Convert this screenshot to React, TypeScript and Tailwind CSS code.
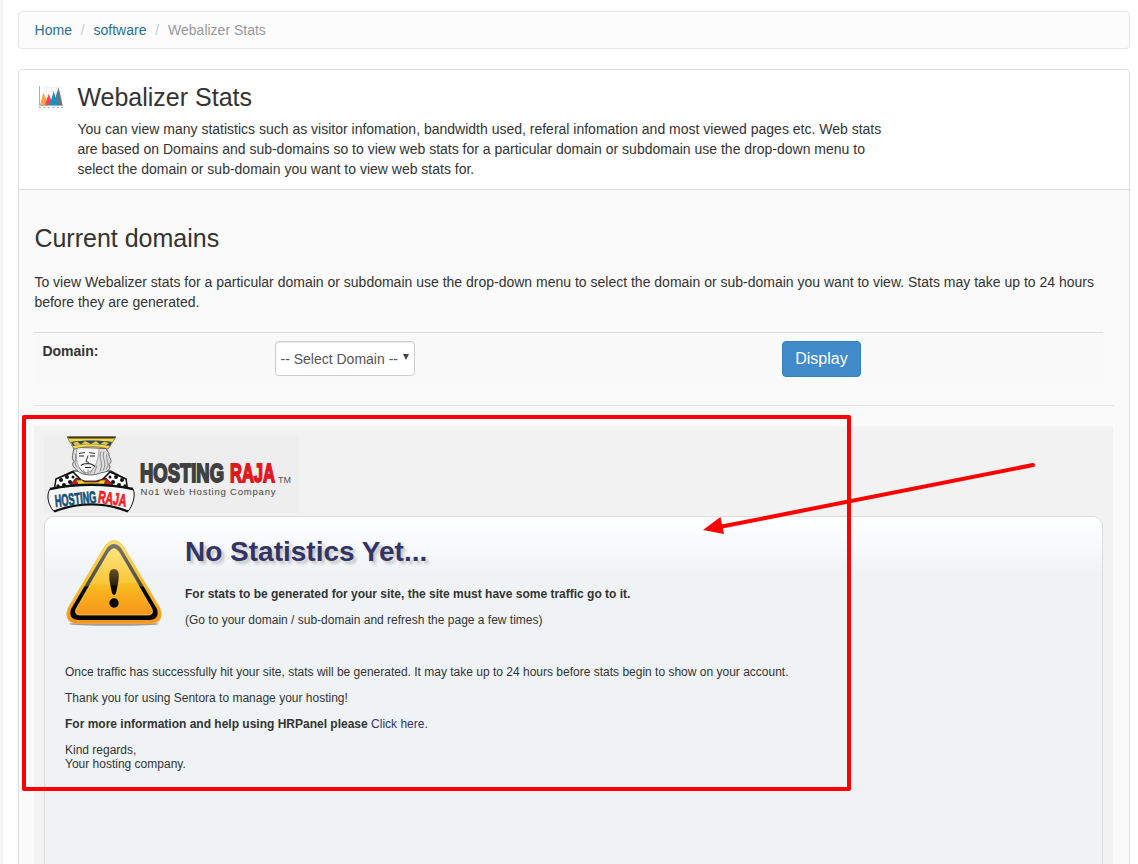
const ChartIcon = () => (
  <svg className="block h-6 w-6" viewBox="0 0 24 24">
    <path d="M3 1.500H23M3 5.500H23M3 9.500H23M3 13.500H23M7.500 0V19M12.500 0V19M17.500 0V19M22.500 0V19" stroke="#f3f3f3" strokeWidth="1" />
    <path d="M1 19.500C2 15 3.500 10 4.500 6.500 6 10 8 15 9 19.500Z" fill="#ffa23f" />
    <path d="M6 19.500C7 15 8.500 11 9.700 8 11 11 13 15 13.500 19.500Z" fill="#f44554" />
    <path d="M14 19.500C15.500 13 18 7 19.500 1.500 21 7 22.500 13 23.500 19.500Z" fill="#587b93" />
    <path d="M10.500 19.500C11.500 15 13.500 10 14.800 5 16 10 17.500 15 18 19.500Z" fill="#069bc6" />
    <path d="M.5 0V19.5H24" fill="none" stroke="#a5b1b7" strokeWidth="1" />
    <path d="M0 21.500H24" stroke="#a5b1b7" strokeWidth="1.2" strokeDasharray="2 2.4" />
  </svg>
);

const BrandLogo = () => (
  <svg className="block h-[78px] w-[257px]" viewBox="0 0 257 78">
    <path d="M2 1H257V78H2Z" fill="#eeeeee" />
    {/* shoulders */}
    <path d="M31 36 14 44 15 52 9 55 12 60H86L89 55 83 51 84 44 69 36Z" fill="#fff" stroke="#111" strokeWidth="1.2" />
    <path d="M14 44 31 37 38 44 28 51 12 57ZM84 44 68 37 61 44 70 51 86 57Z" fill="#fff" stroke="#111" strokeWidth="1.5" />
    <g fill="#111">
      <circle cx="19" cy="45" r="2" /><circle cx="25" cy="42" r="2" /><circle cx="31" cy="42" r="1.500" />
      <circle cx="28" cy="47" r="2" /><circle cx="22" cy="50" r="2" /><circle cx="16" cy="51" r="1.700" />
      <circle cx="80" cy="45" r="2" /><circle cx="74" cy="42" r="2" /><circle cx="68" cy="42" r="1.500" />
      <circle cx="71" cy="47" r="2" /><circle cx="77" cy="50" r="2" /><circle cx="83" cy="51" r="1.700" />
    </g>
    {/* collar */}
    <path d="M25 54 34 43 43 46H54L64 43 75 54Z" fill="#d51a22" stroke="#111" strokeWidth=".8" />
    <path d="M34 45H40L42 47H56L59 45H64L62 49 67 53H57L55 50H43L41 53H30L36 49Z" fill="#ffd333" stroke="#422e13" strokeWidth=".7" />
    {/* head and beard */}
    <g transform="translate(-3 .5)">
      <path d="M35 12C34 19 32 22 35 26 31 30 37 33 38 35 44 41 56 40 63 37 68 37 73 33 70 29 75 25 69 22 70 18L67 13Z" fill="#dedede" stroke="#444" strokeWidth=".8" />
      <path d="M38 12C36 25 39 33 45 37 52 38 59 32 60 13Z" fill="#f8f8f8" stroke="#777" strokeWidth=".6" />
      <path d="M40 18 46 17M50 17 56 18M49 20 47 26 50 27" fill="none" stroke="#333" strokeWidth="1" />
      <path d="M40 20.500H45M51 20.500H56M42 30C45 27 47 29 49 28 52 28 54 29 56 31M46 32H52" fill="none" stroke="#222" strokeWidth="1.100" />
      <path d="M40 32 45 38M44 34 47 39M49 34V39M54 33 51 38M58 30 55 38M62 16C59 23 65 26 61 36M65 16C62 23 69 27 64 35M68 18C66 24 72 28 67 34M36 18C38 23 34 27 38 32" fill="none" stroke="#666" strokeWidth=".7" />
    </g>
    {/* crown */}
    <path d="M25 2H74L66 14C56 11 43 11 32 14Z" fill="#f7d548" stroke="#554817" strokeWidth=".6" />
    <path d="M25 1.500H74L72 3.500H27Z" fill="#3b3419" />
    <path d="M29 7C40 5 59 5 70 7L68 11C57 8.500 42 8.500 31 11Z" fill="#27496b" />
    <path d="M31 8 35 6.500 39 9.500 43 6 49 9 54 6 58 9.500 62 6.500 67 8 64 10C55 8.500 43 8.500 33 10.500Z" fill="#e7c34a" />
    {/* ribbon */}
    <path d="M8 54C35 48.500 64 48.500 91 54 94 60 91 70 86 76.500 63 67 36 67 12 76.500 6 70 4 60 8 54Z" fill="#f8f8f8" stroke="#111" strokeWidth="1" />
    <path d="M8 54C35 48.500 64 48.500 91 54M12 76.500C36 67 63 67 86 76.500" fill="none" stroke="#111" strokeWidth="2.400" />
    <g fontFamily="Liberation Sans, Arial, sans-serif" fontWeight="700" fontSize="17" strokeWidth=".8">
      <text x="13.500" y="72" fill="#155078" stroke="#155078" textLength="41.500" lengthAdjust="spacingAndGlyphs" transform="rotate(-6 13.500 72)">HOSTING</text>
      <text x="55.500" y="67.500" fill="#f5211f" stroke="#f5211f" textLength="28.500" lengthAdjust="spacingAndGlyphs" transform="rotate(8 55.500 67.500)">RAJA</text>
    </g>
    <g fontFamily="Liberation Sans, Arial, sans-serif" fontWeight="700" fontSize="25.500" strokeWidth="1.800">
      <text x="98" y="47" fill="#3f403f" stroke="#3f403f" textLength="84" lengthAdjust="spacingAndGlyphs">HOSTING</text>
      <text x="188" y="47" fill="#e01621" stroke="#e01621" textLength="45" lengthAdjust="spacingAndGlyphs">RAJA</text>
    </g>
    <g fontFamily="Liberation Sans, Arial, sans-serif" fill="#555">
      <text x="236" y="47.500" fontSize="9" textLength="13" lengthAdjust="spacingAndGlyphs">TM</text>
      <text x="98.500" y="60" fontSize="9.500" fill="#444" textLength="135">No1 Web Hosting Company</text>
    </g>
  </svg>
);

const WarningIcon = () => (
  <svg className="block h-[90px] w-[100px]" viewBox="0 0 100 90">
    <defs>
      <linearGradient id="gold" x2="0" y2="1">
        <stop stopColor="#ffe06b" />
        <stop offset=".5" stopColor="#f9c120" />
        <stop offset="1" stopColor="#f7941d" />
      </linearGradient>
      <linearGradient id="rim" x2="0" y2="1">
        <stop stopColor="#77766c" />
        <stop offset=".55" stopColor="#4b473c" />
        <stop offset=".57" stopColor="#050505" />
        <stop offset="1" stopColor="#050505" />
      </linearGradient>
      <linearGradient id="mark" x2="0" y2="1">
        <stop stopColor="#655226" />
        <stop offset=".6" stopColor="#2c210e" />
        <stop offset=".65" stopColor="#050505" />
      </linearGradient>
    </defs>
    <ellipse cx="50" cy="84" rx="45" ry="1.800" fill="#766c65" opacity=".65" />
    <path d="M41 6Q50-5 59 6L96 68Q101 82 88 83.500H12Q-1 82 4 68Z" fill="url(#gold)" stroke="#f6b13f" strokeWidth=".6" />
    <path d="M43 8Q50 0 57 8L93 69Q96 79 86 80H14Q4 79 7 69Z" fill="url(#rim)" />
    <path d="M45 12Q50 5 55 12L88 69Q90 75 84 75H16Q10 75 12 69Z" fill="url(#gold)" stroke="#ffda62" strokeWidth=".7" />
    <path d="M45 12Q50 5 55 12L75 43Q60 43 47 44 36 45 25 44Z" fill="#fff" opacity=".12" />
    <path d="M50 29C57 29 55 40 52 53Q50 57 48 53C45 40 43 29 50 29Z" fill="url(#mark)" />
    <circle cx="50" cy="63" r="4.700" fill="#050505" />
  </svg>
);

const Breadcrumb = () => (
  <nav className="flex h-[38px] items-center rounded-[4px] border border-[#e7e7e7] bg-[#fcfcfc] px-[15.6px]">
    <a href="#" className="text-[#2a6f94]">Home</a>
    <span className="w-[21.6px] text-center text-[#ccc]">/</span>
    <a href="#" className="text-[#2a6f94]">software</a>
    <span className="w-[21.6px] text-center text-[#ccc]">/</span>
    <span className="text-[#999]">Webalizer Stats</span>
  </nav>
);

const StatsNotice = () => (
  <div className="mr-4 ml-[15px] h-[480px] bg-[#f2f2f2] px-2.5 pt-[9px]">
    <div className="-ml-0.5">
      <BrandLogo />
    </div>
    <div className="mt-[3px] h-[400px] rounded-t-[10px] border border-[#dcdcdc] bg-[#eff3f6] bg-[linear-gradient(#ffffff,#eff3f6)] bg-[length:100%_60px] bg-no-repeat px-5 pt-[22px] text-xs leading-[14px]">
      <div className="flex h-[126px]">
        <div className="-ml-0.5 pt-px pl-px">
          <WarningIcon />
        </div>
        <div className="ml-[21px]">
          <h1 className="mb-[22px] text-[28px] leading-[26px] font-bold text-[#333366] [text-shadow:3px_3px_3px_#c4c4c4]">
            No Statistics Yet...
          </h1>
          <p className="mb-3 font-bold">For stats to be generated for your site, the site must have some traffic go to it.</p>
          <p>(Go to your domain / sub-domain and refresh the page a few times)</p>
        </div>
      </div>
      <p className="mb-3">
        Once traffic has successfully hit your site, stats will be generated. It may take up to 24 hours before stats begin to show on your account.
      </p>
      <p className="mb-3">Thank you for using Sentora to manage your hosting!</p>
      <p className="mb-3">
        <b>For more information and help using HRPanel please</b> <a href="#" className="text-[#333366]">Click here.</a>
      </p>
      <p>
        Kind regards,
        <br />
        Your hosting company.
      </p>
    </div>
  </div>
);

const Annotation = () => (
  <>
    <div className="pointer-events-none absolute top-[415px] left-[19px] h-[376px] w-[829px] rounded-[2px] border-4 border-[#ff0000]" />
    <svg className="pointer-events-none absolute top-[455px] left-[697px] h-[90px] w-[340px]" viewBox="0 0 340 90">
      <path d="M333 10 22 71.500" stroke="#f00" strokeWidth="4" strokeLinecap="round" />
      <path d="M3 75 20.500 62 24 79Z" fill="#f00" />
    </svg>
  </>
);

const App = () => (
  <div className="relative h-[864px] w-[1138px] overflow-hidden border-l-[3px] border-[#f5f5f5] bg-white font-['Liberation_Sans',Arial,sans-serif] text-sm leading-5 text-[#333]">
    <main className="ml-[15px] w-[1112px] pt-[11px]">
      <Breadcrumb />
      <section className="mt-5 h-[850px] rounded-[4px] border border-[#ddd] bg-[#fafafa]">
        <header className="flex h-[120px] rounded-t-[3px] border-b border-[#ddd] bg-white pt-[13px] pl-5">
          <div className="pt-[3px]">
            <ChartIcon />
          </div>
          <div className="ml-[14.4px] w-[820px]">
            <h2 className="mb-[7px] text-[25px] leading-[29px]">Webalizer Stats</h2>
            <p>
              You can view many statistics such as visitor infomation, bandwidth used, referal infomation and most viewed pages etc. Web stats
              <br />
              are based on Domains and sub-domains so to view web stats for a particular domain or subdomain use the drop-down menu to
              <br />
              select the domain or sub-domain you want to view web stats for.
            </p>
          </div>
        </header>
        <div className="px-[15.4px] pt-[34px]">
          <h2 className="mb-5 text-[25px] leading-[28px]">Current domains</h2>
          <p className="w-[1078px]">
            To view Webalizer stats for a particular domain or subdomain use the drop-down menu to select the domain or sub-domain you want to view. Stats may take up to 24 hours before they are generated.
          </p>
        </div>
        <div className="mt-5 ml-[15px] flex h-[53px] w-[1069px] border-t border-[#ddd] bg-[#f9f9f9] pt-2 pl-[8.4px]">
          <label className="w-[232.6px] font-bold">Domain:</label>
          <button className="flex h-[35px] w-[140px] items-center justify-between rounded-[4px] border border-[#ccc] bg-white pr-[5px] pl-[4.5px] whitespace-nowrap text-[#555] shadow-[inset_0_1px_1px_rgba(0,0,0,.075)]">
            -- Select Domain --
            <svg className="mb-[3px] h-1.5 w-1.5" viewBox="0 0 6 6">
              <path d="M0 0H6L3 6Z" fill="#444" />
            </svg>
          </button>
          <button className="ml-[367px] h-9 w-[79px] rounded-[4px] border border-[#357ebd] bg-[#428bca] text-base text-white">Display</button>
        </div>
        <div className="mt-5 mr-[15px] mb-5 ml-[15px] border-t border-[#e5e5e5]" />
        <StatsNotice />
      </section>
    </main>
    <Annotation />
  </div>
);

export default App;
